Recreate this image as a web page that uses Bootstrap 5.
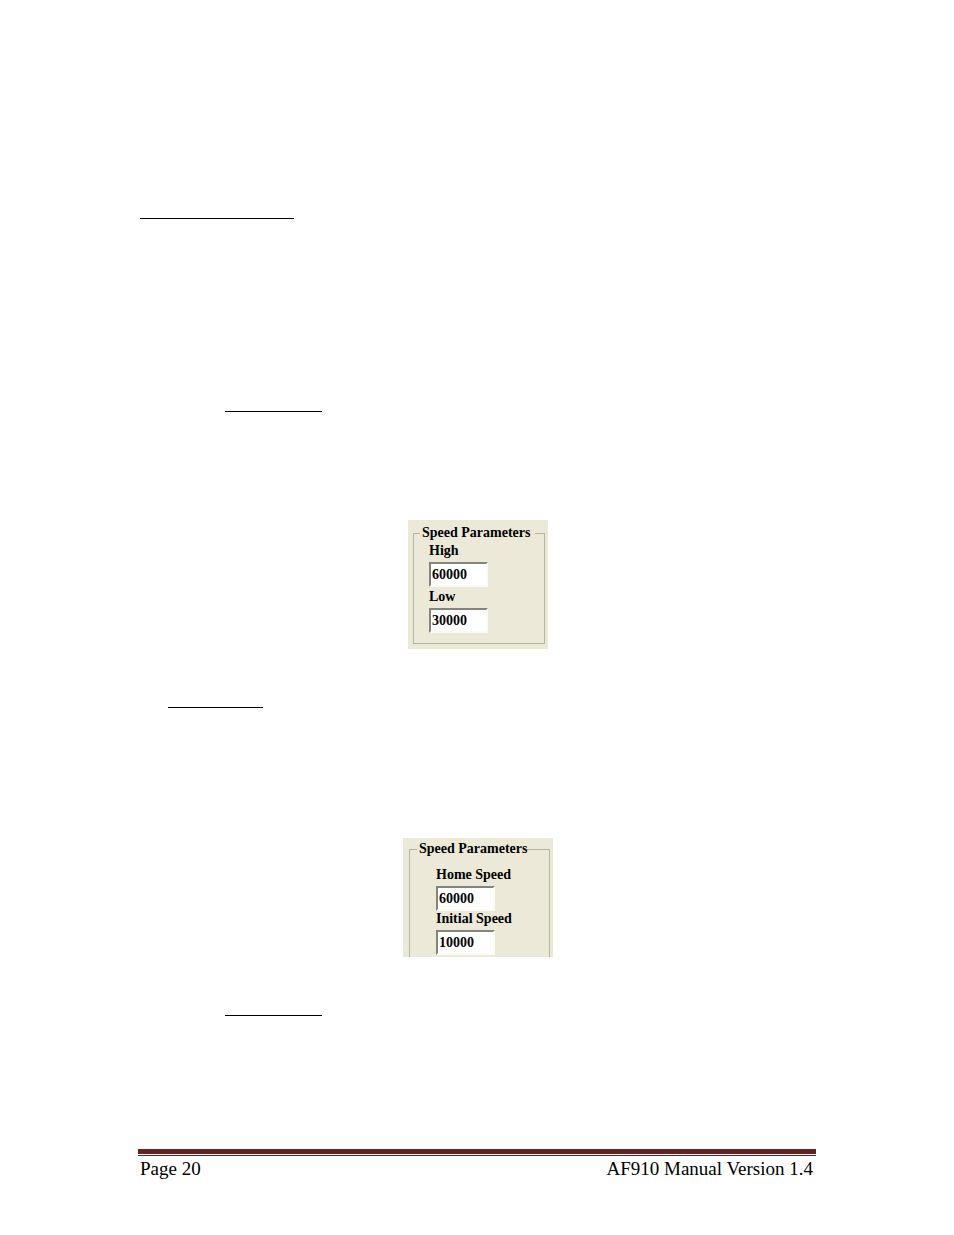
<!DOCTYPE html>
<html lang="en">
<head>
<meta charset="utf-8">
<meta name="viewport" content="width=device-width, initial-scale=1">
<title>AF910 Manual Version 1.4 - Page 20</title>
<link href="https://cdn.jsdelivr.net/npm/bootstrap@5.3.0/dist/css/bootstrap.min.css" rel="stylesheet">
<style>
  body { background: #fff; color: #000; font-family: "Liberation Serif", serif; }
  .sheet { padding: 218px 138px 50px; }
  .sheet main { padding-left: 2px; }
  .rule { height: 1px; background: #000; border: 0; opacity: 1; margin: 0; width: 154px; }
  .rule-step { width: 97px; margin-left: 85px; }
  .rule-item { width: 95px; margin-left: 28px; }
  .gap-section { margin-top: 192px; }
  .gap-figure { margin-top: 108px; }
  .gap-after { margin-top: 58px; }
  .gap-wide { margin-top: 130px; }
  .gap-footer { margin-top: 133px; }

  .dialog { width: 140px; background: #ece9d8; padding: 5px 3px 5px 5px; font-size: 14px; line-height: 16px; font-weight: 700; }
  .dialog-cut { width: 150px; padding: 3px 3px 0 6px; }
  .group { border: 1px solid #b5b3a4; padding: 0 0 10px 15px; }
  .dialog-cut .group { border-bottom: 0; padding: 8px 0 2px 26px; }
  .group-title { font-size: 14px; line-height: 16px; margin: 0 0 2px -9px; padding: 0 5px 0 2px; white-space: nowrap; }
  .dialog-cut .group-title { margin-left: -19px; padding-right: 0; }
  .field-label { display: block; line-height: 16px; margin-bottom: 3px; }
  .field-box { display: block; width: 59px; height: 25px; border: 2px solid #fbfaf5; border-top-color: #85837a; border-left-color: #85837a; border-radius: 0; background: #fff; color: #000; font: 700 14px/18px "Liberation Serif", serif; padding: 0 0 0 1px; }
  .field-box + .field-label { margin-top: 2px; }
  .dialog-cut .field-box + .field-label { margin-top: 0; }

  .foot-bar { border-top: 5px solid #622423; border-bottom: 1px solid #622423; height: 7px; }
  .foot-text { font-size: 19px; line-height: 24px; padding: 1px 3px 0 2px; }
</style>
</head>
<body>
<div class="sheet d-flex flex-column">
  <main class="d-flex flex-column">
    <hr class="rule">
    <hr class="rule rule-step gap-section">
    <form class="dialog gap-figure align-self-center">
      <fieldset class="group">
        <legend class="group-title float-none w-auto fw-bold">Speed Parameters</legend>
        <label class="field-label" for="high">High</label>
        <input class="field-box" id="high" type="text" value="60000">
        <label class="field-label" for="low">Low</label>
        <input class="field-box" id="low" type="text" value="30000">
      </fieldset>
    </form>
    <hr class="rule rule-item gap-after">
    <form class="dialog dialog-cut gap-wide align-self-center">
      <fieldset class="group">
        <legend class="group-title float-none w-auto fw-bold">Speed Parameters</legend>
        <label class="field-label" for="home">Home Speed</label>
        <input class="field-box" id="home" type="text" value="60000">
        <label class="field-label" for="initial">Initial Speed</label>
        <input class="field-box" id="initial" type="text" value="10000">
      </fieldset>
    </form>
    <hr class="rule rule-step gap-after">
  </main>
  <footer class="gap-footer">
    <div class="foot-bar"></div>
    <div class="foot-text d-flex justify-content-between">
      <span>Page 20</span>
      <span>AF910 Manual Version 1.4</span>
    </div>
  </footer>
</div>
<script src="https://cdn.jsdelivr.net/npm/bootstrap@5.3.0/dist/js/bootstrap.bundle.min.js"></script>
</body>
</html>
